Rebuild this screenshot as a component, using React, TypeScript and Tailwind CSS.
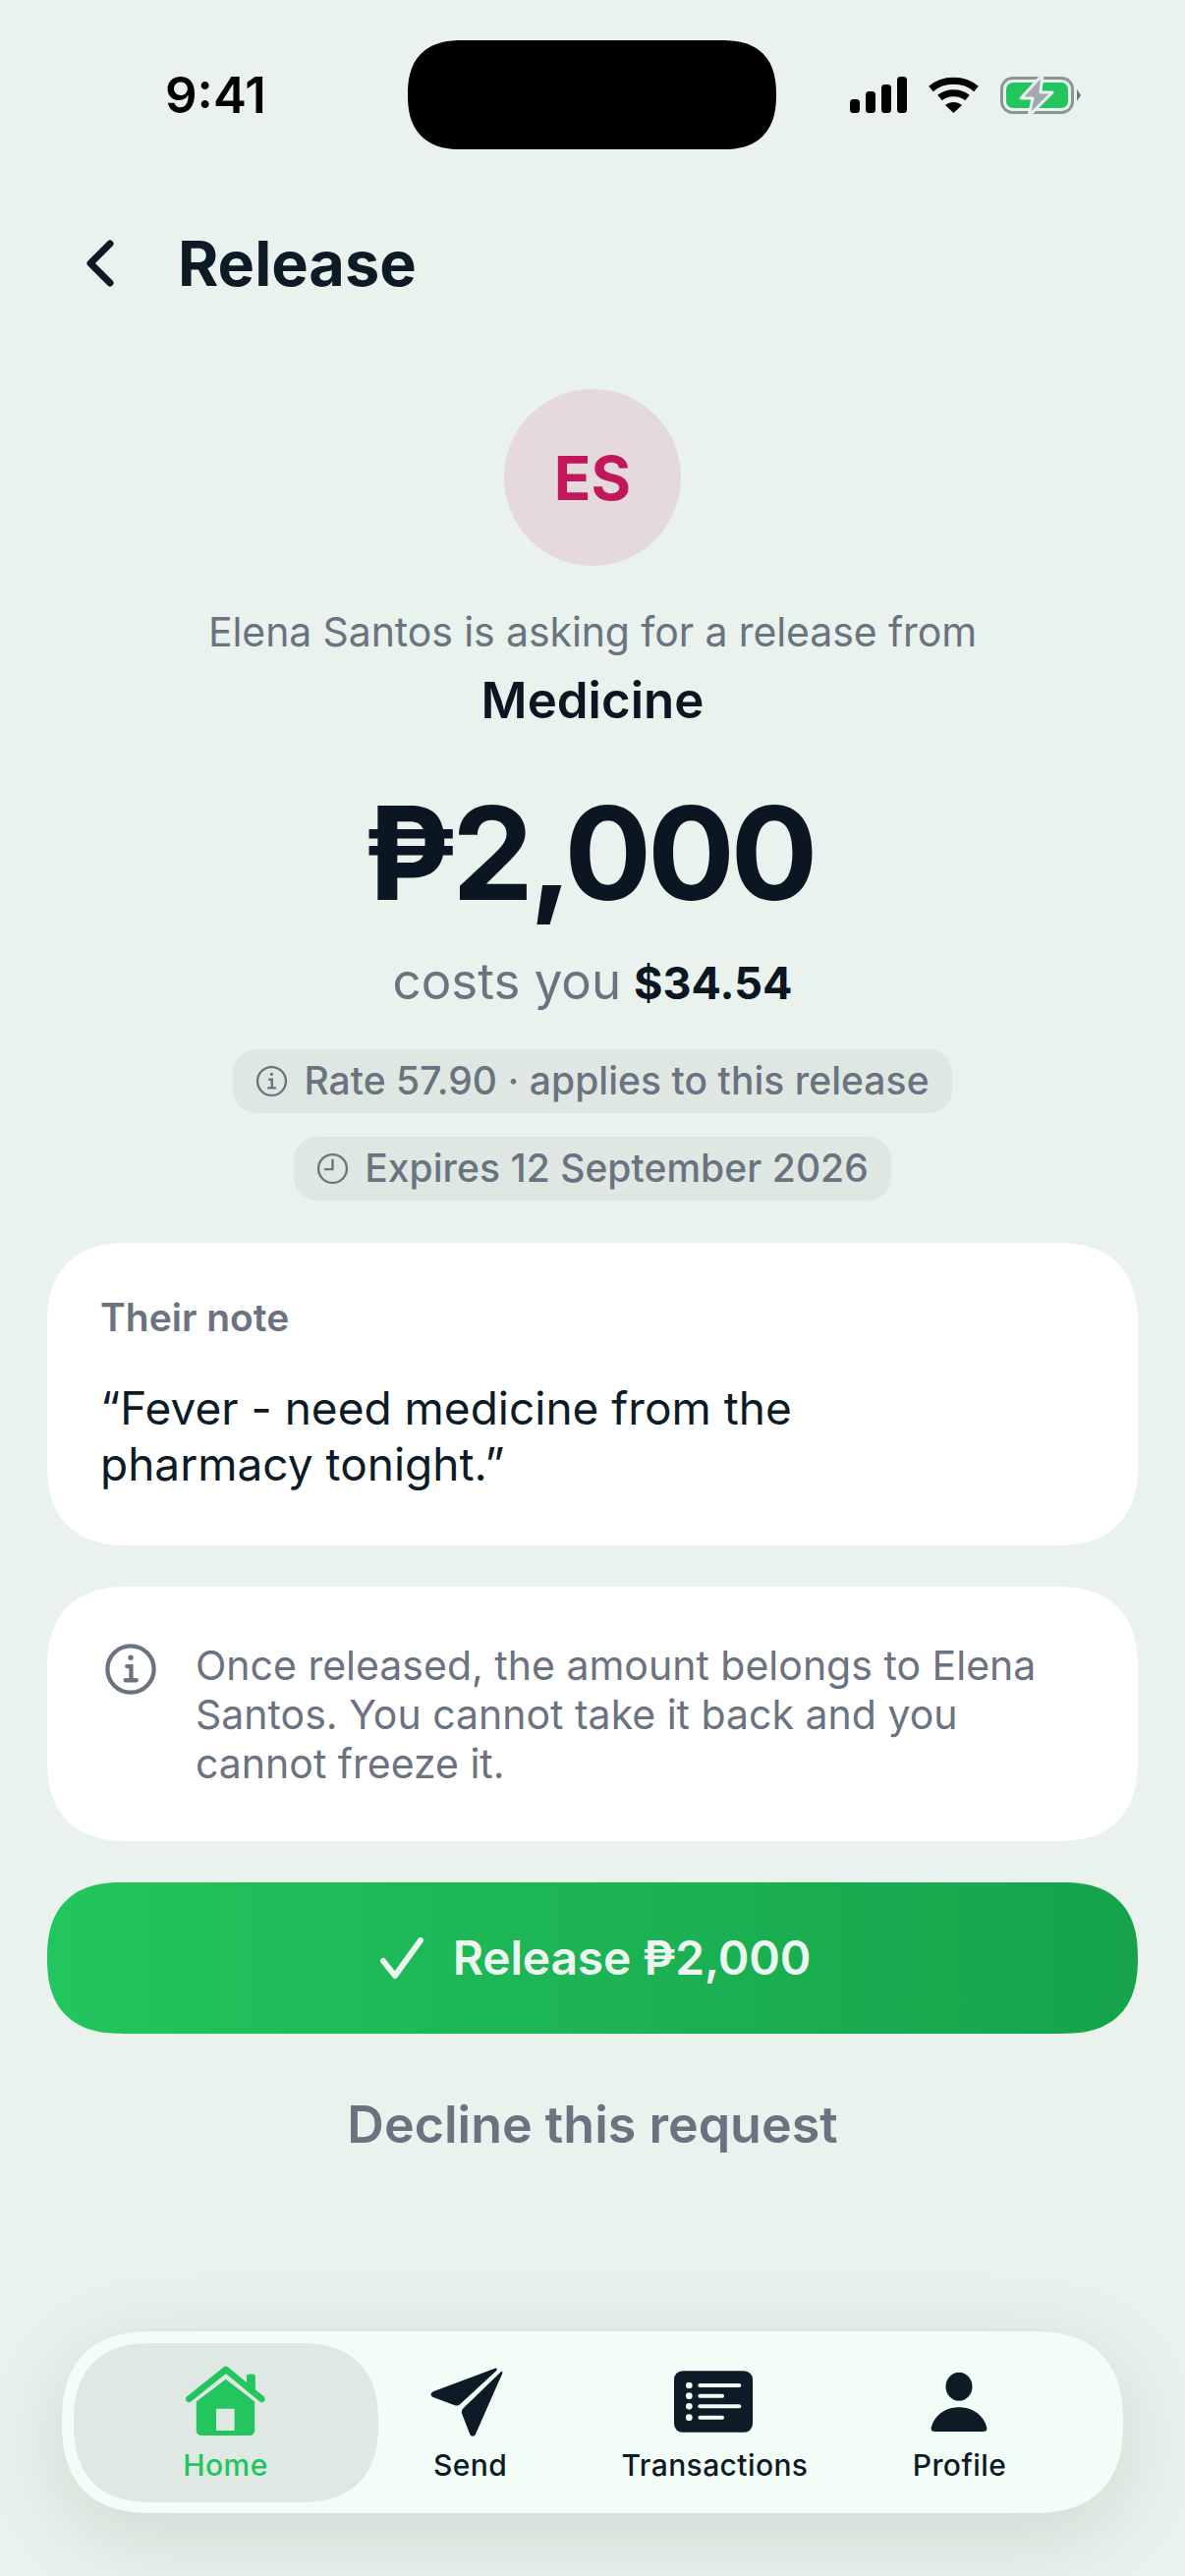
import React from 'react';

const StatusIcons: React.FC = () => (
  <div className="ml-auto flex items-center gap-[22px]">
    {/* signal */}
    <svg width="58" height="37" viewBox="0 0 58 37" fill="#000">
      <rect x="0" y="23" width="10" height="14" rx="3.5" />
      <rect x="16" y="15" width="10" height="22" rx="3.5" />
      <rect x="32" y="8" width="10" height="29" rx="3.5" />
      <rect x="48" y="0" width="10" height="37" rx="3.5" />
    </svg>
    {/* wifi */}
    <svg width="51" height="37" viewBox="0 0 51 37" fill="none" stroke="#000" strokeWidth="7">
      <path d="M2.5 12.5C15 1.5 36 1.5 48.5 12.5" />
      <path d="M11.5 21.5C19 15 32 15 39.5 21.5" />
      <path d="M17 29L25.5 37L34 29C29 25 22 25 17 29Z" fill="#000" stroke="none" />
    </svg>
    {/* battery */}
    <svg width="82" height="42" viewBox="0 0 82 42" fill="none">
      <rect x="1.5" y="3.5" width="72" height="35" rx="11" stroke="#8f949a" strokeWidth="3" />
      <rect x="6" y="8" width="63" height="26" rx="7" fill="#22c55e" />
      <path d="M78 15L82 21L78 27Z" fill="#6b7280" />
      <path d="M43 0L21 24H33L29 42L53 18H41Z" fill="#a3a8ad" stroke="#e9f2ed" strokeWidth="3" strokeLinejoin="round" />
    </svg>
  </div>
);

const InfoIcon: React.FC<{ size: number; stroke: number }> = ({ size, stroke }) => (
  <svg width={size} height={size} viewBox="0 0 24 24" fill="none" stroke="#6b7280" strokeWidth={stroke} strokeLinecap="round">
    <circle cx="12" cy="12" r="10.5" />
    <circle cx="12" cy="6.8" r="0.7" fill="#6b7280" strokeWidth="1" />
    <path d="M10.3 10.7H12.2V16.9M9.6 17H14.6" />
  </svg>
);

const ClockIcon: React.FC = () => (
  <svg width="33" height="33" viewBox="0 0 24 24" fill="none" stroke="#6b7280" strokeWidth="1.7" strokeLinecap="round" strokeLinejoin="round">
    <circle cx="12" cy="12" r="10.5" />
    <path d="M12 5.5V12.5H6.5" />
  </svg>
);

const Chip: React.FC<{ icon: React.ReactNode; label: string }> = ({ icon, label }) => (
  <div className="flex h-[65px] items-center gap-[16px] rounded-[24px] bg-[#dfe7e2] px-[23px] text-[39px] font-medium tracking-[0.05px] text-[#6b7280]">
    {icon}
    {label}
  </div>
);

const HomeIcon = () => (
  <svg width="81" height="73" viewBox="55 85 248 222">
    <path d="M65 188L180 96L292 188" fill="none" stroke="#22c55e" strokeWidth="20" strokeLinecap="round" strokeLinejoin="round" />
    <path d="M245 120A8 8 0 0 1 253 110H264A8 8 0 0 1 272 118V160L245 140Z" fill="#22c55e" />
    <path fillRule="evenodd" d="M88 196L180 126L270 196V286A16 16 0 0 1 254 302H104A16 16 0 0 1 88 286ZM150 218V286H207V218Z" fill="#22c55e" />
  </svg>
);

const SendIcon = () => (
  <svg width="76" height="75" viewBox="800 85 228 226" fill="#0d1b27" className="-translate-x-[5px]">
    <path d="M1003 96L816 166C804 171 805 181 816 185L880 209C888 212 893 210 898 205L1008 103C1012 98 1009 94 1003 96Z" />
    <path d="M1020 108L905 220C901 225 900 230 903 237L926 296C930 307 941 307 945 296L1026 112C1028 105 1024 103 1020 108Z" />
  </svg>
);

const TransactionsIcon = () => (
  <svg width="80" height="63" viewBox="107 100 240 187" className="-translate-x-[2px]">
    <rect x="107" y="100" width="240" height="187" rx="26" fill="#0d1b27" />
    <g fill="#f3fdf7">
      <circle cx="153" cy="144" r="10" />
      <circle cx="153" cy="176" r="10" />
      <circle cx="153" cy="208" r="10" />
      <circle cx="153" cy="242" r="10" />
      <rect x="180" y="138" width="132" height="12" rx="6" />
      <rect x="180" y="170" width="80" height="12" rx="6" />
      <rect x="180" y="202" width="132" height="12" rx="6" />
      <rect x="180" y="236" width="80" height="12" rx="6" />
    </g>
  </svg>
);

const ProfileIcon = () => (
  <svg width="58" height="62" viewBox="886 103 176 186" fill="#0d1b27" className="-translate-x-[1px]">
    <ellipse cx="974" cy="148" rx="41" ry="44" />
    <path d="M888 276C896 238 932 212 974 212C1016 212 1052 238 1060 276C1061 283 1057 287 1050 287H898C891 287 887 283 888 276Z" />
  </svg>
);

const NavItem: React.FC<{ icon: React.ReactNode; label: string; active?: boolean }> = ({ icon, label, active }) => (
  <div className={`flex h-[162px] w-[249px] shrink-0 flex-col items-center pt-[22px] text-[30px] font-medium tracking-[0.4px] whitespace-nowrap ${active ? 'text-[#22c55e]' : 'text-[#0d1b27]'}`}>
    <div className="flex h-[76px] items-center justify-center">{icon}</div>
    <span className="mt-[8px] leading-[36px]">{label}</span>
  </div>
);

export default function App() {
  return (
    <div className="flex h-[2622px] w-[1206px] flex-col overflow-hidden bg-[#e9f2ed] font-['Inter',sans-serif] text-[#0d1b27]">
      {/* Status bar */}
      <div className="mt-[41px] flex h-[111px] items-center pr-[106px] pl-[168px]">
        <span className="w-[247px] text-[51px] font-semibold leading-none text-black">9:41</span>
        <div className="h-[111px] w-[375px] rounded-[60px] bg-black [corner-shape:superellipse(1.3)]" />
        <StatusIcons />
      </div>

      {/* Header */}
      <div className="mt-[79px] flex h-[74px] items-center pl-[83px]">
        <svg width="36" height="54" viewBox="0 0 36 54" fill="none" stroke="#0d1b27" strokeWidth="7" strokeLinecap="round" strokeLinejoin="round">
          <path d="M29 7L9 27L29 47" />
        </svg>
        <h1 className="ml-[62px] text-[63px] font-bold leading-none">Release</h1>
      </div>

      {/* Request summary */}
      <div className="mt-[91px] flex flex-col items-center">
        <div className="flex h-[180px] w-[180px] items-center justify-center rounded-full bg-[#e5d9dc] text-[62px] font-bold text-[#c2185b]">
          ES
        </div>
        <p className="mt-[42px] text-[41px] leading-[50px] tracking-[-0.1px] text-[#6b7280]">Elena Santos is asking for a release from</p>
        <p className="mt-[13px] text-[51px] font-semibold leading-[64px] text-[#0a1622]">Medicine</p>
        <p className="mt-[48px] mr-[8px] text-[132px] font-bold leading-[150px] tracking-[-4.5px] text-[#0a1622]">₱2,000</p>
        <p className="mt-[26px] flex items-baseline gap-[13px] text-[51px] leading-[60px] text-[#6b7280]">
          costs you <span className="text-[45px] font-bold text-[#0a1622]">$34.54</span>
        </p>
        <div className="mt-[37px] flex flex-col items-center gap-[24px]">
          <Chip icon={<InfoIcon size={33} stroke={1.7} />} label="Rate 57.90 · applies to this release" />
          <Chip icon={<ClockIcon />} label="Expires 12 September 2026" />
        </div>
      </div>

      {/* Note */}
      <div className="mx-[48px] mt-[43px] h-[308px] rounded-[84px] bg-white px-[54px] pt-[52px] [corner-shape:superellipse(1.3)]">
        <p className="text-[39px] font-semibold leading-[48px] text-[#6b7280]">Their note</p>
        <p className="mt-[40px] w-[800px] text-[46px] leading-[57px]">“Fever - need medicine from the pharmacy tonight.”</p>
      </div>

      {/* Warning */}
      <div className="mx-[48px] mt-[42px] flex h-[259px] gap-[39px] rounded-[84px] bg-white pt-[55px] pr-[54px] pl-[58px] [corner-shape:superellipse(1.3)]">
        <div className="pt-[2px]">
          <InfoIcon size={54} stroke={1.9} />
        </div>
        <p className="text-[41px] leading-[50px] text-[#6b7280]">
          Once released, the amount belongs to Elena Santos. You cannot take it back and you cannot freeze it.
        </p>
      </div>

      {/* Actions */}
      <div className="mx-[48px] mt-[42px] flex h-[154px] items-center justify-center gap-[30px] rounded-[84px] bg-gradient-to-r from-[#22c55e] to-[#16a34a] pl-[6px] text-[48px] font-semibold tracking-[-0.2px] text-[#ecf5ef] [corner-shape:superellipse(1.3)]">
        <svg width="44" height="42" viewBox="0 0 44 42" fill="none" stroke="#ecf5ef" strokeWidth="6" strokeLinecap="round" strokeLinejoin="round">
          <path d="M3 24L15 39L41 3" />
        </svg>
        Release ₱2,000
      </div>
      <p className="mt-[62px] text-center text-[52px] font-semibold leading-[62px] text-[#6b7280]">Decline this request</p>

      {/* Bottom nav */}
      <div className="mx-[63px] mt-[179px] flex h-[185px] items-center rounded-[100px] bg-[#f3fdf7] pl-[12px] shadow-[0_20px_90px_rgba(0,40,20,0.12)] [corner-shape:superellipse(1.3)]">
        <div className="h-[162px] w-[310px] shrink-0 rounded-[90px] bg-[#dfe8e2] pl-[30px] [corner-shape:superellipse(1.3)]">
          <NavItem icon={<HomeIcon />} label="Home" active />
        </div>
        <div className="-ml-[31px] flex">
          <NavItem icon={<SendIcon />} label="Send" />
          <NavItem icon={<TransactionsIcon />} label="Transactions" />
          <NavItem icon={<ProfileIcon />} label="Profile" />
        </div>
      </div>
    </div>
  );
}
